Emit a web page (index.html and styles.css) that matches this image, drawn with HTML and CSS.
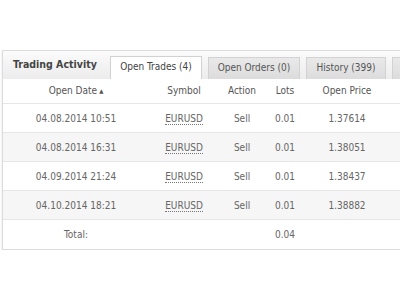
FILE: index.html
```html
<!DOCTYPE html>
<html>
<head>
<meta charset="utf-8">
<link rel="stylesheet" href="styles.css">
</head>
<body>
<div class="panel">
  <div class="head">
    <div class="title">Trading Activity</div>
    <div class="tabs">
      <div class="tab active t1">Open Trades (4)</div>
      <div class="tab t2">Open Orders (0)</div>
      <div class="tab t3">History (399)</div>
      <div class="tab t4"></div>
    </div>
  </div>
  <div class="table">
    <div class="row hdr">
      <div class="c c1">Open Date<span class="arrow">▲</span></div>
      <div class="c c2">Symbol</div>
      <div class="c c3">Action</div>
      <div class="c c4">Lots</div>
      <div class="c c5">Open Price</div>
    </div>
    <div class="row">
      <div class="c c1">04.08.2014 10:51</div>
      <div class="c c2"><span class="sym">EURUSD</span></div>
      <div class="c c3">Sell</div>
      <div class="c c4">0.01</div>
      <div class="c c5">1.37614</div>
    </div>
    <div class="row alt">
      <div class="c c1">04.08.2014 16:31</div>
      <div class="c c2"><span class="sym">EURUSD</span></div>
      <div class="c c3">Sell</div>
      <div class="c c4">0.01</div>
      <div class="c c5">1.38051</div>
    </div>
    <div class="row">
      <div class="c c1">04.09.2014 21:24</div>
      <div class="c c2"><span class="sym">EURUSD</span></div>
      <div class="c c3">Sell</div>
      <div class="c c4">0.01</div>
      <div class="c c5">1.38437</div>
    </div>
    <div class="row alt">
      <div class="c c1">04.10.2014 18:21</div>
      <div class="c c2"><span class="sym">EURUSD</span></div>
      <div class="c c3">Sell</div>
      <div class="c c4">0.01</div>
      <div class="c c5">1.38882</div>
    </div>
    <div class="row total">
      <div class="c c1">Total:</div>
      <div class="c c2"></div>
      <div class="c c3"></div>
      <div class="c c4">0.04</div>
      <div class="c c5"></div>
    </div>
  </div>
</div>
</body>
</html>
```
FILE: styles.css
```css
html, body {
  margin: 0;
  padding: 0;
  background: #fff;
  overflow: hidden;
}
body {
  font-family: "DejaVu Sans Condensed", "DejaVu Sans", Tahoma, sans-serif;
  font-size: 10px;
  color: #666;
}
.panel {
  margin: 50px 0 0 2px;
  border: 1px solid #dcdcdc;
  border-right: none;
  background: #fff;
  box-shadow: 0 2px 2px rgba(0, 0, 0, 0.12);
}
.head {
  display: flex;
  align-items: flex-end;
  height: 28px;
  overflow: hidden;
  background: linear-gradient(#fbfbfb, #ececec);
}
.title {
  flex: none;
  width: 107px;
  padding-left: 10px;
  padding-bottom: 2px;
  box-sizing: border-box;
  align-self: center;
  font-weight: bold;
  font-size: 10.5px;
  color: #444;
  white-space: nowrap;
}
.tabs {
  display: flex;
  flex: none;
  gap: 6px;
  align-items: flex-end;
}
.tab {
  flex: none;
  height: 22px;
  line-height: 19px;
  box-sizing: border-box;
  text-align: center;
  background: linear-gradient(#e9e9e9, #dcdcdc);
  border: 1px solid #d2d2d2;
  border-bottom: none;
  color: #555;
}
.tab.active {
  background: #fff;
  height: 23px;
  line-height: 20px;
  color: #444;
}
.t1 { width: 92px; }
.t2 { width: 92px; }
.t3 { width: 80px; }
.t4 { width: 40px; }
.table {
  display: flex;
  flex-direction: column;
}
.row {
  display: grid;
  grid-template-columns: 146px 70px 46px 40px 84px 1fr;
  height: 29px;
  align-items: center;
  border-bottom: 1px solid #e6e6e6;
  box-sizing: border-box;
}
.row.hdr {
  height: 25px;
  padding-bottom: 2px;
  color: #555;
}
.row.alt {
  background: #f6f6f6;
}
.row.total {
  border-bottom: none;
}
.c {
  text-align: center;
  white-space: nowrap;
}
.arrow {
  font-size: 6px;
  margin-left: 2px;
  vertical-align: 1px;
}
.sym {
  border-bottom: 1px dotted #777;
  color: #666;
}
```
